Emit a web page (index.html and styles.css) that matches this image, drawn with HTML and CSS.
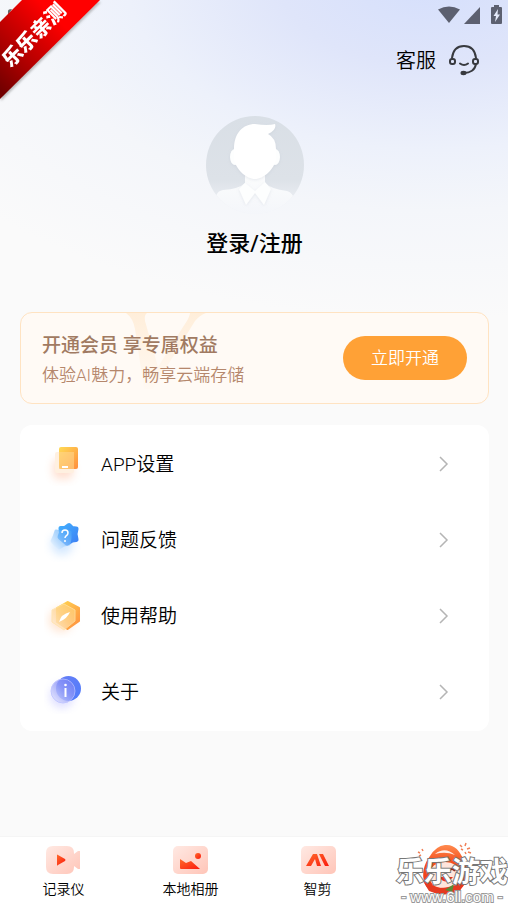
FILE: index.html
```html
<!DOCTYPE html>
<html lang="zh-CN">
<head>
<meta charset="utf-8">
<meta name="viewport" content="width=device-width, initial-scale=1">
<title>我的</title>
<link rel="stylesheet" href="styles.css">
</head>
<body>
<div class="statusbar">
  <svg width="68" height="20" viewBox="0 0 68 20" aria-hidden="true" fill="#5c6070">
    <path d="M0 4.500Q11 -1.500 22 4.500L11 18Z"/>
    <path d="M26 19H42V2Z"/>
    <path d="M56 2V0H61V2H63Q64 2 64 3V18Q64 19 63 19H54Q53 19 53 18V3Q53 2 54 2Z"/>
    <path d="M60 4L55.500 11H58L57 17L62 9.500H59.500Z" fill="#e5eafa"/>
  </svg>
</div>
<header class="topbar">
  <a class="service" href="#service">
    <span>客服</span>
    <svg width="32" height="32" viewBox="0 0 32 32" aria-hidden="true" fill="none" stroke="#383a3f" stroke-width="2" stroke-linecap="round">
      <path d="M4 13C5 5 9.500 1 16 1S27 5 28 13"/>
      <rect x="2" y="14" width="5" height="5" rx="2"/>
      <rect x="25" y="14" width="5" height="5" rx="2"/>
      <path d="M28 19C27 25 22 28 16 28"/>
      <path d="M12 18.500Q16 21.500 20 18.500"/>
      <ellipse cx="15.500" cy="28" rx="2" ry="1.200" fill="#383a3f"/>
    </svg>
  </a>
</header>
<main class="content">
  <section class="profile">
    <svg class="avatar" viewBox="0 0 98 98" aria-hidden="true">
      <defs>
        <linearGradient id="avBg" x1="0" y1="0" x2="0" y2="1"><stop offset="0" stop-color="#d9dfe6"/><stop offset=".65" stop-color="#dde2e8"/><stop offset="1" stop-color="#f3f5f9"/></linearGradient>
        <linearGradient id="avBody" x1="0" y1="0" x2="0" y2="1"><stop offset="0" stop-color="#fcfdfd"/><stop offset="1" stop-color="#f4f6fa"/></linearGradient>
        <filter id="soft" x="-20%" y="-20%" width="140%" height="140%"><feDropShadow dx="0" dy="1" stdDeviation="1.500" flood-color="#aab4c2" flood-opacity=".25"/></filter>
        <clipPath id="avClip"><circle cx="49" cy="49" r="49"/></clipPath>
      </defs>
      <g clip-path="url(#avClip)">
        <rect width="98" height="98" fill="url(#avBg)"/>
        <path d="M0 98L11 78Q12 75 17 74Q33 73 39 67V55H59V67Q65 73 81 75Q85 76 87 80L98 98Z" fill="url(#avBody)"/>
        <g filter="url(#soft)" fill="#fdfefe">
          <path d="M39 67L33 73L40 89L49 77L58 89L65 73L59 66L49 75Z"/>
          <ellipse cx="29" cy="41" rx="5" ry="8"/>
          <ellipse cx="69" cy="41" rx="5" ry="8"/>
          <path d="M28 33C28 17 37 8 49 8Q62 10 69 8Q71 14 62 18Q70 22 70 33V43C68 54 57 63 49 63S30 54 28 43Z" fill="#fff"/>
        </g>
      </g>
    </svg>
    <a class="login" href="#login">登录/注册</a>
  </section>
  <section class="member">
    <svg class="member-mark" width="90" height="76" viewBox="0 0 90 76" aria-hidden="true">
      <defs><linearGradient id="mark" x1="0" y1="0" x2="0" y2="1"><stop offset="0" stop-color="#ffeeda"/><stop offset="1" stop-color="#fff9f3"/></linearGradient></defs>
      <path d="M0 0H21Q18 2 19 8L32 54L57 14Q64 4 64 0H80Q74 2 69 8L27 76H18L9 16Q7 5 0 0Z" fill="url(#mark)"/>
    </svg>
    <div class="member-text">
      <h2>开通会员 享专属权益</h2>
      <p>体验AI魅力，畅享云端存储</p>
    </div>
    <button class="open" type="button">立即开通</button>
  </section>
  <nav class="menu" aria-label="设置">
    <a class="row" href="#settings">
      <svg class="row-icon" viewBox="0 0 44 44" aria-hidden="true">
        <defs><linearGradient id="bk" x1="0" y1="0" x2="1" y2="1"><stop stop-color="#ffdb55"/><stop offset="1" stop-color="#ff8d3d"/></linearGradient><linearGradient id="bk2" x1="1" y1="0" x2="0" y2="1"><stop stop-color="#ffcb68"/><stop offset=".5" stop-color="#ffd696"/><stop offset="1" stop-color="#fff0df"/></linearGradient><filter id="blur" x="-50%" y="-50%" width="200%" height="200%"><feGaussianBlur stdDeviation="4"/></filter></defs>
        <rect x="9" y="17" width="20" height="20" rx="5" fill="#ff9865" opacity=".3" filter="url(#blur)"/>
        <rect x="15" y="5" width="19" height="22" rx="2" fill="url(#bk)"/>
        <path d="M13 10H15V27H30V29Q30 31 28 31H13Q11 31 11 29V12Q11 10 13 10Z" fill="#fff0e0"/>
        <rect x="15" y="10" width="15" height="17" fill="#ffd68e" opacity=".6"/>
        <path d="M18 25H24" stroke="#fff" stroke-width="2"/>
      </svg>
      <span>APP设置</span>
      <svg class="chevron" viewBox="0 0 10 16" aria-hidden="true"><path d="M1 1L8 8L1 15"/></svg>
    </a>
    <a class="row" href="#feedback">
      <svg class="row-icon" viewBox="0 0 44 44" aria-hidden="true">
        <defs><linearGradient id="st" x1="0" y1="0" x2="1" y2="1"><stop stop-color="#42adfd"/><stop offset="1" stop-color="#3d83f5"/></linearGradient><linearGradient id="st2" x1="1" y1="0" x2="0" y2="1"><stop stop-color="#4ba6fa"/><stop offset=".45" stop-color="#86c2fc"/><stop offset="1" stop-color="#f1f8ff"/></linearGradient></defs>
        <circle cx="18" cy="26" r="11" fill="#5ba8ff" opacity=".25" filter="url(#blur)"/>
        <path d="M25 7.500L28 10.500L32 11L31 16L32 21.500L28 22L23 25L19 21.500L16 19L17.500 15L17 10.500L21 10.500Z" fill="url(#st)" stroke="url(#st)" stroke-width="5" stroke-linejoin="round"/>
        <path d="M12 13L17 14L22 12L26 14L26 20L25 26L20 27L15 30L11 27L8 23L10 19Z" fill="url(#st2)" stroke="url(#st2)" stroke-width="3" stroke-linejoin="round" opacity=".65"/>
        <path d="M18 15Q18 12 21 12Q24 12 24 15Q24 17 22 18Q21 19 21 20" fill="none" stroke="#fff" stroke-width="1.500"/><circle cx="21" cy="23" r="1" fill="#fff"/>
      </svg>
      <span>问题反馈</span>
      <svg class="chevron" viewBox="0 0 10 16" aria-hidden="true"><path d="M1 1L8 8L1 15"/></svg>
    </a>
    <a class="row" href="#help">
      <svg class="row-icon" viewBox="0 0 44 44" aria-hidden="true">
        <circle cx="17" cy="26" r="12" fill="#ff9b53" opacity=".25" filter="url(#blur)"/>
        <path d="M23.500 8L35 14V27L23.500 35L13 28V14Z" fill="url(#bk)" stroke="url(#bk)" stroke-width="2" stroke-linejoin="round"/>
        <path d="M20 10L31 16V27L20 36L8 28V16Z" fill="url(#bk2)" stroke="#ffe1a5" opacity=".8" stroke-linejoin="round"/>
        <path d="M15 28Q17 20 26 18Q23 25 15 28Z" fill="#fff"/>
      </svg>
      <span>使用帮助</span>
      <svg class="chevron" viewBox="0 0 10 16" aria-hidden="true"><path d="M1 1L8 8L1 15"/></svg>
    </a>
    <a class="row" href="#about">
      <svg class="row-icon" viewBox="0 0 44 44" aria-hidden="true">
        <defs><linearGradient id="ab" x1="0" y1="0" x2="1" y2="1"><stop stop-color="#687ff6"/><stop offset="1" stop-color="#507cfb"/></linearGradient><linearGradient id="ab2" x1="1" y1="0" x2="0" y2="1"><stop stop-color="#6c7af4"/><stop offset=".45" stop-color="#949cf8"/><stop offset="1" stop-color="#f0f1ff"/></linearGradient></defs>
        <circle cx="18" cy="26" r="12" fill="#8181ff" opacity=".25" filter="url(#blur)"/>
        <circle cx="24.500" cy="18.500" r="12.500" fill="url(#ab)"/>
        <circle cx="19" cy="21" r="12" fill="url(#ab2)" stroke="#b9bfff" opacity=".8"/>
        <path d="M21.500 18V27" stroke="#fff" stroke-width="2"/><circle cx="21.500" cy="15" r="1.300" fill="#fff"/>
      </svg>
      <span>关于</span>
      <svg class="chevron" viewBox="0 0 10 16" aria-hidden="true"><path d="M1 1L8 8L1 15"/></svg>
    </a>
  </nav>
</main>
<nav class="tabs" aria-label="主导航">
  <a class="tab" href="#recorder">
    <svg width="36" height="28" viewBox="0 0 36 28" aria-hidden="true">
      <defs><linearGradient id="pk" x1="0" y1="0" x2="1" y2="1"><stop stop-color="#ffe9e3"/><stop offset="1" stop-color="#ffc5b8"/></linearGradient><linearGradient id="rd" x1="0" y1="0" x2="1" y2="1"><stop stop-color="#ff6a2b"/><stop offset="1" stop-color="#fb1a0e"/></linearGradient></defs>
      <path d="M7 0H21Q28 0 28 7V8L32 5H34V23H32L28 20V21Q28 28 21 28H7Q0 28 0 21V7Q0 0 7 0Z" fill="url(#pk)"/>
      <path d="M11 9Q11 8 12 9L19 13Q20 14 19 15L12 19Q11 20 11 19Z" fill="url(#rd)"/>
    </svg>
    <span>记录仪</span>
  </a>
  <a class="tab" href="#album">
    <svg width="36" height="28" viewBox="0 0 36 28" aria-hidden="true">
      <rect x="0" width="35" height="28" rx="5" fill="url(#pk)"/>
      <circle cx="25" cy="10" r="3" fill="url(#rd)"/>
      <path d="M7 13L13 17L18 15L27 23H8Q7 23 7 22Z" fill="url(#rd)"/>
    </svg>
    <span>本地相册</span>
  </a>
  <a class="tab" href="#edit">
    <svg width="36" height="28" viewBox="0 0 36 28" aria-hidden="true">
      <rect x="1" width="35" height="28" rx="5" fill="url(#pk)"/>
      <path d="M6 20L13 8H17L21 20H17L15 13L11 20ZM19 8H23L29 20H25Z" fill="url(#rd)"/>
    </svg>
    <span>智剪</span>
  </a>
  <a class="tab tab-me" href="#me" aria-label="我的">
    <svg width="56" height="54" viewBox="0 0 56 54" aria-hidden="true">
      <defs><linearGradient id="me" x1="0" y1="0" x2="0" y2="1"><stop stop-color="#ff8b4f"/><stop offset=".35" stop-color="#f4511e"/><stop offset="1" stop-color="#e9321c"/></linearGradient></defs>
      <path d="M28 3C38 2 42 9 46 16C51 25 54 33 48 42Q42 52 28 52Q12 52 8 42C4 32 7 22 13 14Q19 4 28 3Z" fill="url(#me)"/>
      <path d="M18 12Q28 4 38 13Q29 9 18 12Z" fill="#fff0e9"/>
      <path d="M12 31Q16 20 28 20T44 31Q44 45 28 46T12 31Z" fill="#ffe5dc"/>
      <path d="M19 29Q23 25 26 29M32 29Q35 25 38 29" fill="none" stroke="#8c2c1c" stroke-width="2"/>
      <path d="M22 35Q29 44 36 35Z" fill="#e83220"/>
      <path d="M6 39Q20 53 48 39L43 49Q27 56 12 49Z" fill="#e53a21"/>
      <path d="M28 48L37 42L35 50Z" fill="#598b35"/>
      <path d="M1 10L3 11M5 7L6 9M2 14L4 13M43 3L45 5M49 1L48 4M53 6L50 7M54 11L51 10M44 7L46 8M49 12L48 10" stroke="#f08058" stroke-width="1.500"/>
    </svg>
  </a>
</nav>
<div class="ribbon">
  <svg width="104" height="104" viewBox="0 0 104 104" aria-hidden="true">
    <defs><linearGradient id="rib" gradientUnits="userSpaceOnUse" x1="0" y1="90" x2="80" y2="10"><stop stop-color="#720000"/><stop offset=".3" stop-color="#aa0000"/><stop offset=".8" stop-color="#ff0000"/></linearGradient></defs>
    <path d="M8 11Q8 9 12 9L8 15Z" fill="#666"/>
    <path d="M22 0H100L0 99V22Z" fill="url(#rib)"/>
  </svg>
  <span>乐乐亲测</span>
</div>
<div class="watermark"><strong>乐乐游戏</strong><span>- www.6ll.com -</span></div>
</body>
</html>
```
FILE: styles.css
```css
* {
  box-sizing: border-box;
}

body {
  position: relative;
  display: flex;
  flex-direction: column;
  min-height: 100vh;
  margin: 0;
  overflow-x: hidden;
  color: #000;
  font-family: Roboto, "Noto Sans CJK SC", sans-serif;
  font-weight: 350;
  background:
    radial-gradient(ellipse 120% 340px at 85% -20px, #d5dffc 0, #dfe5fa 25%, #edf1fb 50%, #f4f6fa 68%, #fafafa 100%),
    #fafafa;
}

a {
  color: inherit;
  text-decoration: none;
}

svg {
  flex: none;
}

.statusbar {
  display: flex;
  justify-content: flex-end;
  height: 30px;
  padding: 5px 2px 0 0;
}

.topbar {
  display: flex;
  justify-content: flex-end;
  padding: 15px 28px 0;
}

.service {
  display: flex;
  align-items: center;
  gap: 12px;
  font-size: 20px;
  line-height: 32px;
}

.content {
  flex: 1;
  padding: 39px 19px 20px 20px;
}

.profile {
  display: flex;
  flex-direction: column;
  align-items: center;
  gap: 14px;
  margin-bottom: 52px;
}

.avatar {
  width: 98px;
  height: 98px;
}

.login {
  font-size: 22px;
  font-weight: 500;
  line-height: 32px;
}

.member {
  position: relative;
  display: flex;
  align-items: center;
  justify-content: space-between;
  min-height: 92px;
  margin-bottom: 21px;
  padding: 0 21px;
  overflow: hidden;
  border: 1px solid #ffe3c2;
  border-radius: 12px;
  background: #fffaf5;
}

.member-mark {
  position: absolute;
  top: 0;
  left: 105px;
}

.member-text {
  position: relative;
  padding-top: 2px;
}

.member h2 {
  margin: 0;
  color: #a17a62;
  font-size: 19px;
  font-weight: 500;
  line-height: 32px;
}

.member p {
  margin: 0;
  color: #b5876c;
  font-size: 17px;
  line-height: 26px;
}

.open {
  height: 44px;
  padding: 0 28px;
  border: 0;
  border-radius: 22px;
  color: #fff;
  font: inherit;
  font-size: 17px;
  line-height: 42px;
  background: #ffa136;
}

.menu {
  padding: 1px 0;
  border-radius: 12px;
  background: #fff;
}

.row {
  display: flex;
  align-items: center;
  height: 76px;
  padding: 0 40px 0 24px;
  font-size: 19px;
}

.row span {
  padding-bottom: 3px;
}

.row-icon {
  width: 44px;
  height: 44px;
  margin-right: 13px;
}

.chevron {
  width: 10px;
  height: 16px;
  margin-left: auto;
  fill: none;
  stroke: #b5b5b5;
  stroke-width: 1.5;
}

.tabs {
  display: grid;
  grid-template-columns: repeat(4, 1fr);
  min-height: 70px;
  border-top: 1px solid #f5f5f5;
  background: #fff;
}

.tab {
  display: flex;
  flex-direction: column;
  align-items: center;
  gap: 5px;
  padding-top: 9px;
  font-size: 14px;
  line-height: 20px;
}

.tab-me {
  padding-top: 5px;
}

.ribbon {
  position: absolute;
  top: 0;
  left: 0;
  display: grid;
  filter: drop-shadow(1px 2px 1px #8888);
  pointer-events: none;
}

.ribbon span {
  position: absolute;
  top: 26px;
  left: -6px;
  width: 80px;
  color: #fff;
  font-size: 20px;
  font-weight: 900;
  line-height: 18px;
  text-align: center;
  transform: rotate(-45deg);
}

.watermark {
  position: absolute;
  right: 0;
  bottom: 0;
  display: flex;
  flex-direction: column;
  align-items: center;
  color: #fff;
  pointer-events: none;
}

.watermark strong {
  font-size: 28px;
  font-weight: 700;
  line-height: 30px;
  paint-order: stroke fill;
  -webkit-text-stroke: 2px #777;
}

.watermark span {
  font-family: "Liberation Sans", sans-serif;
  font-size: 15px;
  line-height: 18px;
  paint-order: stroke fill;
  -webkit-text-stroke: 2px #999;
}
```
